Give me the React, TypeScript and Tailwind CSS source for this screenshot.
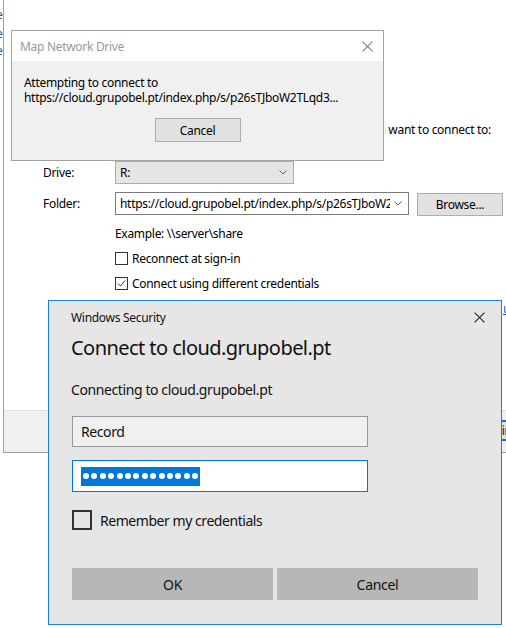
import React from "react"

const ui = "font-['Noto_Sans','Open_Sans',sans-serif]"

function CloseX({ className }: { className: string }) {
  return (
    <svg viewBox="0 0 10 10" className={className} fill="none" stroke="currentColor" strokeWidth="1">
      <path d="M0.5 0.5 L9.5 9.5 M9.5 0.5 L0.5 9.5" />
    </svg>
  )
}

function Chevron() {
  return (
    <svg viewBox="0 0 8 5" className="w-[8px] h-[5px] text-[#606060]" fill="none" stroke="currentColor" strokeWidth="1">
      <path d="M0.5 0.5 L4 4 L7.5 0.5" />
    </svg>
  )
}

function SmallCheck({ checked, label }: { checked?: boolean; label: string }) {
  return (
    <div className="flex items-center gap-[4px] h-[16px]">
      <div className="w-[13px] h-[13px] border border-[#333] bg-white flex items-center justify-center">
        {checked && (
          <svg viewBox="0 0 11 11" className="w-[11px] h-[11px]" fill="none" stroke="#333" strokeWidth="1">
            <path d="M2 5.5 L4.5 8 L9 2.5" />
          </svg>
        )}
      </div>
      <span>{label}</span>
    </div>
  )
}

const dots = Array.from({ length: 14 })

export default function App() {
  return (
    <div className={`relative w-[506px] h-[628px] bg-white overflow-hidden text-[12px] leading-[15px] tracking-[-0.3px] text-black ${ui}`}>
      {/* window behind, far left edge */}
      <div className="absolute left-0 top-0 w-[3px] h-[60px] overflow-hidden text-[12px] leading-[17px] text-[#1a4fa0]">
        <div className="pt-[6px] -ml-[4px]">e</div>
        <div className="-ml-[4px] mt-[2px]">e</div>
        <div className="-ml-[4px]">e</div>
      </div>

      {/* Map Network Drive wizard */}
      <div className="absolute left-[3px] top-0 w-[540px] h-[453px] border-l border-b border-[#a0a0a0] flex flex-col">
        <div className="flex-1 bg-white relative">
          <div className="absolute left-[381px] top-[122px] whitespace-nowrap w-[106px] overflow-hidden flex justify-end">
            <span className="shrink-0">Specify the drive letter for the connection and the folder that you want to connect to:</span>
          </div>

          <div className="absolute left-[39px] top-[161px] grid grid-cols-[72px_auto] gap-y-[7px] items-center">
            <span>Drive:</span>
            <div className="w-[179px] h-[23px] bg-[#e5e5e5] border border-[#adadad] flex items-center justify-between pl-[4px] pr-[6px]">
              <span>R:</span>
              <Chevron />
            </div>
            <span>Folder:</span>
            <div className="flex items-center gap-[8px]">
              <div className="w-[294px] h-[23px] bg-white border border-[#7a7a7a] flex items-center pl-[4px] pr-[6px] gap-[4px]">
                <span className="flex-1 overflow-hidden whitespace-nowrap">https://cloud.grupobel.pt/index.php/s/p26sTJboW2TLqd3</span>
                <Chevron />
              </div>
              <div className="w-[86px] h-[23px] mt-[2px] bg-[#e1e1e1] border border-[#adadad] flex items-center justify-center">
                Browse...
              </div>
            </div>
            <span />
            <div className="flex flex-col gap-[9px] pt-[3px]">
              <div>Example: \\server\share</div>
              <SmallCheck label="Reconnect at sign-in" />
              <SmallCheck checked label="Connect using different credentials" />
            </div>
          </div>

          <div className="absolute left-[499px] top-[301px] text-[#0066cc] underline whitespace-nowrap">u</div>
        </div>
        <div className="h-[42px] bg-[#f0f0f0] border-t border-[#dfdfdf] relative">
          <div className="absolute left-[470px] top-[9px] w-[75px] h-[21px] border-2 border-[#0078d7] bg-[#e1e1e1] flex items-center justify-center text-[#4a0010]">
            Finish
          </div>
        </div>
      </div>

      {/* progress dialog */}
      <div className="absolute left-[11px] top-[30px] w-[373px] h-[131px] border border-[#a3a3a3] flex flex-col">
        <div className="h-[30px] bg-white flex items-center justify-between pl-[8px] pr-[10px] text-[#999]">
          <span>Map Network Drive</span>
          <CloseX className="w-[11px] h-[11px] text-[#7a7a7a]" />
        </div>
        <div className="flex-1 bg-[#f0f0f0] pt-[14px] pl-[12px] flex flex-col">
          <div>Attempting to connect to</div>
          <div className="whitespace-nowrap">https://cloud.grupobel.pt/index.php/s/p26sTJboW2TLqd3...</div>
          <div className="flex justify-center pr-[12px] mt-[13px]">
            <div className="w-[86px] h-[24px] bg-[#e1e1e1] border border-[#adadad] flex items-center justify-center">
              Cancel
            </div>
          </div>
        </div>
      </div>

      {/* Windows Security credential prompt */}
      <div className="absolute left-[48px] top-[300px] w-[454px] h-[325px] bg-[#e6e6e6] border border-[#1883d7] flex flex-col px-[23px] pt-[8px] text-[#111]">
        <div className="flex items-center justify-between h-[16px]">
          <span className="-ml-[1px]">Windows Security</span>
          <CloseX className="w-[11px] h-[11px] text-[#222] -mr-[7px]" />
        </div>
        <div className="text-[20px] leading-[28px] tracking-[-0.55px] mt-[9px] -ml-[1px]">Connect to cloud.grupobel.pt</div>
        <div className="text-[14px] leading-[20px] tracking-[-0.4px] mt-[18px] -ml-[1px]">Connecting to cloud.grupobel.pt</div>
        <div className="w-[296px] h-[31px] mt-[16px] bg-[#f0f0f0] border border-[#999] flex items-center pl-[8px] text-[14px] tracking-[-0.4px]">
          Record
        </div>
        <div className="w-[296px] h-[32px] mt-[13px] bg-white border border-[#0078d7] flex items-center pl-[8px]">
          <div className="h-[19px] w-[119px] bg-[#0078d7] flex items-center gap-[2.4px] pl-[2px]">
            {dots.map((_, i) => (
              <span key={i} className="w-[6px] h-[6px] rounded-full bg-white" />
            ))}
          </div>
        </div>
        <div className="flex items-center gap-[8px] mt-[18px] text-[14px] tracking-[-0.45px]">
          <div className="w-[20px] h-[20px] border-2 border-[#333]" />
          <span>Remember my credentials</span>
        </div>
        <div className="flex gap-[4px] mt-[38px] text-[14px] tracking-[-0.3px]">
          <div className="w-[201px] h-[32px] bg-[#b7b7b7] flex items-center justify-center">OK</div>
          <div className="w-[201px] h-[32px] bg-[#b7b7b7] flex items-center justify-center">Cancel</div>
        </div>
      </div>
    </div>
  )
}
